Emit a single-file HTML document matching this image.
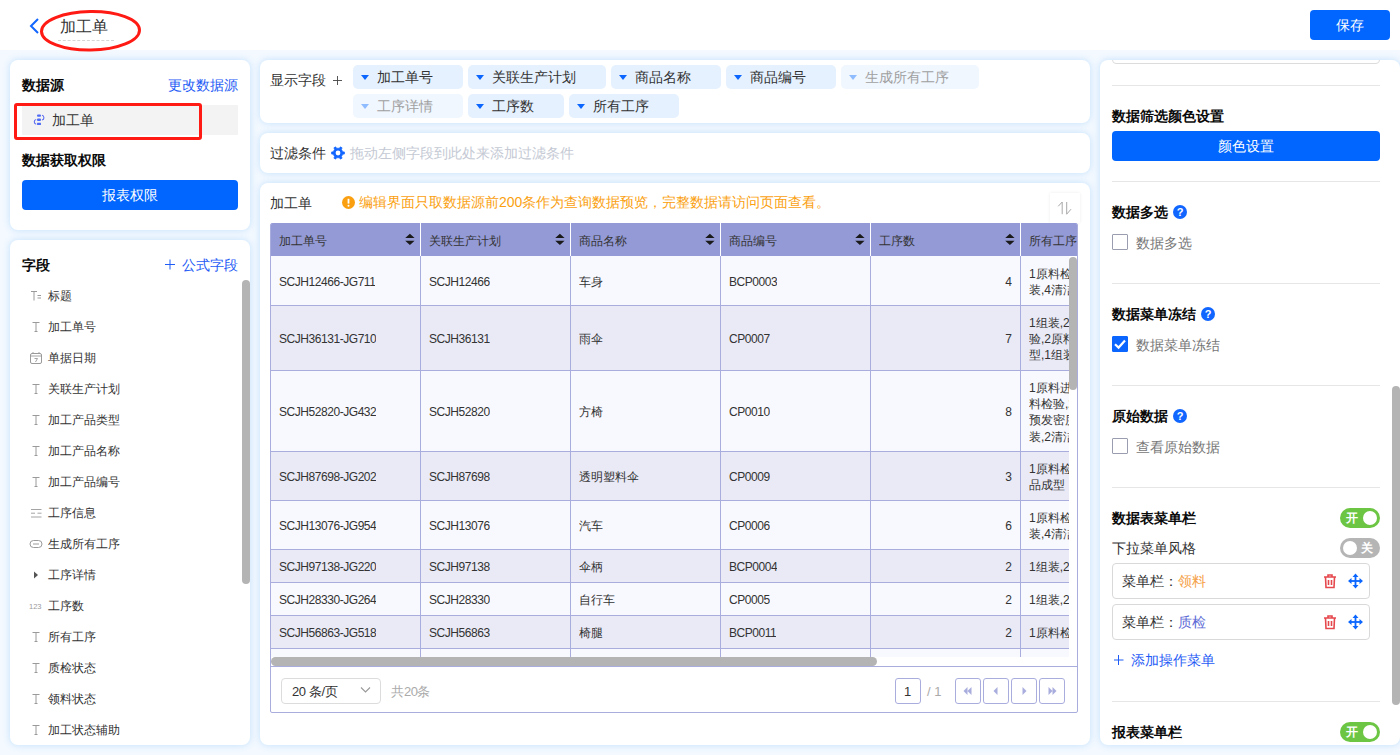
<!DOCTYPE html><html><head><meta charset="utf-8"><style>
*{box-sizing:border-box;margin:0;padding:0}
html,body{width:1400px;height:755px;overflow:hidden}
body{font-family:"Liberation Sans",sans-serif;font-size:14px;color:#333;background:#F4F9FF;position:relative}
.abs{position:absolute}
.panel{position:absolute;background:#fff;border-radius:8px;box-shadow:0 0 6px 1px rgba(196,226,253,.85)}
.t{position:absolute;white-space:nowrap;line-height:14px}
.b{font-weight:bold;color:#0a0a0a}
.blue{color:#1F5CF5}
.btn{position:absolute;background:#0066FF;color:#fff;border-radius:4px;text-align:center}
.fld{left:48px;font-size:12px;color:#333;line-height:12px}
.chip{position:absolute;height:24px;border-radius:5px;background:#E5F1FE;font-size:14px;line-height:24px;color:#333;padding-left:24px;white-space:nowrap}
.chip:before{content:"";position:absolute;left:8px;top:10px;border-left:4.5px solid transparent;border-right:4.5px solid transparent;border-top:5px solid #0B66FF}
.chip.dis{background:#F0F7FF;color:#A0A0A0}
.chip.dis:before{border-top-color:#8FBCFF}
.cell{position:absolute;font-size:12px;line-height:16.25px;color:#333;overflow:hidden;white-space:nowrap}
.lat{letter-spacing:-0.45px}
.hl{position:absolute;background:#A9ADDE}
.rt{font-size:14px}
.dv{position:absolute;left:1112px;width:268px;height:1px;background:#E6E6E6}
.cb{position:absolute;left:1112px;width:16px;height:16px;border:1px solid #9A9CB0;border-radius:1px;background:#fff}
.q{position:absolute;width:14px;height:14px;border-radius:50%;background:#1166FF;color:#fff;font-size:11px;font-weight:bold;line-height:14px;text-align:center}
.tg{position:absolute;left:1340px;width:40px;height:20px;border-radius:10px;color:#fff;font-size:12px;line-height:20px;font-weight:bold}
.tg i{position:absolute;top:3px;width:14px;height:14px;border-radius:50%;background:#fff}
.pb{position:absolute;top:678px;width:26px;height:26px;border:1px solid #A9ADDE;border-radius:3px;background:#fff}
</style></head><body>
<div class="abs" style="left:0;top:0;width:1400px;height:50px;background:#fff"></div>
<svg class="abs" style="left:28px;top:17px" width="14" height="18" viewBox="0 0 14 18"><path d="M10 2 L3 9 L10 16" fill="none" stroke="#1166FF" stroke-width="2"/></svg>
<div class="t" style="left:60px;top:19px;font-size:16px;line-height:16px;color:#333">加工单</div>
<div class="abs" style="left:58px;top:40px;width:56px;border-top:1px dashed #d5d5d5"></div>
<svg class="abs" style="left:36px;top:6px" width="110" height="50"><ellipse cx="54.5" cy="24.8" rx="49" ry="19.3" fill="none" stroke="#FF1A14" stroke-width="3" transform="rotate(-0.8 54.5 24.8)"/></svg>
<div class="btn" style="left:1310px;top:10px;width:80px;height:30px;line-height:30px;font-size:14px">保存</div>
<div class="panel" style="left:10px;top:60px;width:240px;height:170px"></div>
<div class="t b" style="left:22px;top:78px">数据源</div>
<div class="t blue" style="left:168px;top:78px">更改数据源</div>
<div class="abs" style="left:22px;top:105px;width:216px;height:30px;background:#F3F3F3"></div>
<svg class="abs" style="left:32px;top:111px" width="14" height="16" viewBox="0 0 14 16"><g fill="#4F6BF5"><rect x="5" y="3.4" width="4" height="2.4" rx="1"/><rect x="5" y="7.6" width="4" height="2.4" rx="1"/><rect x="5" y="11.8" width="4" height="2.2" rx="0.4"/></g><g fill="none" stroke="#5B6CF0" stroke-width="1.1"><path d="M10 4.3A2.4 2.4 0 0 1 10 9"/><path d="M4.2 8.5A2.4 2.4 0 0 0 4.2 13.2"/></g></svg>
<div class="t" style="left:52px;top:113px">加工单</div>
<div class="abs" style="left:14px;top:103px;width:188px;height:37px;border:3px solid #FF1A14;border-radius:3px"></div>
<div class="t b" style="left:22px;top:153px">数据获取权限</div>
<div class="btn" style="left:22px;top:180px;width:216px;height:30px;line-height:30px">报表权限</div>
<div class="panel" style="left:10px;top:240px;width:240px;height:505px"></div>
<div class="t b" style="left:22px;top:258px">字段</div>
<svg class="abs" style="left:165px;top:259px" width="11" height="11"><path d="M5 0.5V10.5M0 5.5H10" stroke="#1F5CF5" stroke-width="1"/></svg>
<div class="t blue" style="left:182px;top:258px">公式字段</div>
<div class="t fld" style="top:289.5px">标题</div>
<svg class="abs" style="left:29px;top:288.5px" width="14" height="14" viewBox="0 0 14 14"><path d="M2 2.5H8M5 2.5V11.5M8.5 6.5H12M8.5 9H12" stroke="#9a9a9a" stroke-width="1" fill="none"/></svg>
<div class="t fld" style="top:320.5px">加工单号</div>
<svg class="abs" style="left:29px;top:319.5px" width="14" height="14" viewBox="0 0 14 14"><path d="M3.5 2.5H10.5M7 2.5V11.5M5.5 11.5H8.5" stroke="#9a9a9a" stroke-width="1" fill="none"/></svg>
<div class="t fld" style="top:351.5px">单据日期</div>
<svg class="abs" style="left:29px;top:350.5px" width="14" height="14" viewBox="0 0 14 14"><rect x="1.5" y="2.5" width="11" height="10" rx="1.5" stroke="#9a9a9a" fill="none"/><path d="M1.5 5H12.5M4 1V3M10 1V3M5.5 7.5H8.5L6.5 11" stroke="#9a9a9a" stroke-width="0.9" fill="none"/></svg>
<div class="t fld" style="top:382.5px">关联生产计划</div>
<svg class="abs" style="left:29px;top:381.5px" width="14" height="14" viewBox="0 0 14 14"><path d="M3.5 2.5H10.5M7 2.5V11.5M5.5 11.5H8.5" stroke="#9a9a9a" stroke-width="1" fill="none"/></svg>
<div class="t fld" style="top:413.5px">加工产品类型</div>
<svg class="abs" style="left:29px;top:412.5px" width="14" height="14" viewBox="0 0 14 14"><path d="M3.5 2.5H10.5M7 2.5V11.5M5.5 11.5H8.5" stroke="#9a9a9a" stroke-width="1" fill="none"/></svg>
<div class="t fld" style="top:444.5px">加工产品名称</div>
<svg class="abs" style="left:29px;top:443.5px" width="14" height="14" viewBox="0 0 14 14"><path d="M3.5 2.5H10.5M7 2.5V11.5M5.5 11.5H8.5" stroke="#9a9a9a" stroke-width="1" fill="none"/></svg>
<div class="t fld" style="top:475.5px">加工产品编号</div>
<svg class="abs" style="left:29px;top:474.5px" width="14" height="14" viewBox="0 0 14 14"><path d="M3.5 2.5H10.5M7 2.5V11.5M5.5 11.5H8.5" stroke="#9a9a9a" stroke-width="1" fill="none"/></svg>
<div class="t fld" style="top:506.5px">工序信息</div>
<svg class="abs" style="left:29px;top:505.5px" width="14" height="14" viewBox="0 0 14 14"><path d="M2 3.5H12.5M2 7.2H6M8.5 7.2H12.5M2 11H12.5" stroke="#9a9a9a" stroke-width="0.9" fill="none"/></svg>
<div class="t fld" style="top:537.5px">生成所有工序</div>
<svg class="abs" style="left:29px;top:536.5px" width="14" height="14" viewBox="0 0 14 14"><rect x="1" y="3.5" width="12" height="7" rx="3.5" stroke="#9a9a9a" fill="none"/><path d="M4 7H10" stroke="#9a9a9a"/></svg>
<div class="t fld" style="top:568.5px">工序详情</div>
<svg class="abs" style="left:29px;top:567.5px" width="14" height="14" viewBox="0 0 14 14"><path d="M5 3.5L9 7L5 10.5Z" fill="#555"/></svg>
<div class="t fld" style="top:599.5px">工序数</div>
<svg class="abs" style="left:29px;top:598.5px" width="14" height="14" viewBox="0 0 14 14"><text x="0" y="10" font-size="7.5" fill="#9a9a9a" font-family="Liberation Sans">123</text></svg>
<div class="t fld" style="top:630.5px">所有工序</div>
<svg class="abs" style="left:29px;top:629.5px" width="14" height="14" viewBox="0 0 14 14"><path d="M3.5 2.5H10.5M7 2.5V11.5M5.5 11.5H8.5" stroke="#9a9a9a" stroke-width="1" fill="none"/></svg>
<div class="t fld" style="top:661.5px">质检状态</div>
<svg class="abs" style="left:29px;top:660.5px" width="14" height="14" viewBox="0 0 14 14"><path d="M3.5 2.5H10.5M7 2.5V11.5M5.5 11.5H8.5" stroke="#9a9a9a" stroke-width="1" fill="none"/></svg>
<div class="t fld" style="top:692.5px">领料状态</div>
<svg class="abs" style="left:29px;top:691.5px" width="14" height="14" viewBox="0 0 14 14"><path d="M3.5 2.5H10.5M7 2.5V11.5M5.5 11.5H8.5" stroke="#9a9a9a" stroke-width="1" fill="none"/></svg>
<div class="t fld" style="top:723.5px">加工状态辅助</div>
<svg class="abs" style="left:29px;top:722.5px" width="14" height="14" viewBox="0 0 14 14"><path d="M3.5 2.5H10.5M7 2.5V11.5M5.5 11.5H8.5" stroke="#9a9a9a" stroke-width="1" fill="none"/></svg>
<div class="abs" style="left:242px;top:280px;width:8px;height:304px;background:#B4B4B4;border-radius:4px"></div>
<div class="panel" style="left:260px;top:60px;width:830px;height:63px"></div>
<div class="t" style="left:270px;top:73px">显示字段</div>
<svg class="abs" style="left:333px;top:76px" width="9" height="9"><path d="M4.5 0V9M0 4.5H9" stroke="#444" stroke-width="0.9"/></svg>
<div class="chip" style="left:353px;top:65px;width:110px">加工单号</div>
<div class="chip" style="left:468px;top:65px;width:138px">关联生产计划</div>
<div class="chip" style="left:611px;top:65px;width:110px">商品名称</div>
<div class="chip" style="left:726px;top:65px;width:110px">商品编号</div>
<div class="chip dis" style="left:841px;top:65px;width:138px">生成所有工序</div>
<div class="chip dis" style="left:353px;top:94px;width:110px">工序详情</div>
<div class="chip" style="left:468px;top:94px;width:96px">工序数</div>
<div class="chip" style="left:569px;top:94px;width:110px">所有工序</div>
<div class="panel" style="left:260px;top:133px;width:830px;height:40px"></div>
<div class="t" style="left:270px;top:146px">过滤条件</div>
<svg class="abs" style="left:330.5px;top:146px" width="14" height="14" viewBox="0 0 14 14"><path d="M11.85 5.79 L13.52 5.97 L13.52 8.03 L11.85 8.21 L10.47 10.60 L11.15 12.13 L9.37 13.16 L8.38 11.81 L5.62 11.81 L4.63 13.16 L2.85 12.13 L3.53 10.60 L2.15 8.21 L0.48 8.03 L0.48 5.97 L2.15 5.79 L3.53 3.40 L2.85 1.87 L4.63 0.84 L5.62 2.19 L8.38 2.19 L9.37 0.84 L11.15 1.87 L10.47 3.40Z" fill="#1366FF" stroke="#1366FF" stroke-width="0.6" stroke-linejoin="round"/><circle cx="7" cy="7" r="2.4" fill="#fff"/></svg>
<div class="t" style="left:350px;top:146px;color:#C4C9D4">拖动左侧字段到此处来添加过滤条件</div>
<div class="panel" style="left:260px;top:183px;width:830px;height:562px"></div>
<div class="t" style="left:270px;top:196px">加工单</div>
<svg class="abs" style="left:342px;top:196px" width="13" height="13" viewBox="0 0 13 13"><circle cx="6.5" cy="6.5" r="6.5" fill="#FA9F10"/><path d="M6.5 2.8V7.6" stroke="#fff" stroke-width="1.8"/><circle cx="6.5" cy="9.8" r="1" fill="#fff"/></svg>
<div class="t" style="left:359px;top:195px;color:#FA9F10">编辑界面只取数据源前200条作为查询数据预览，完整数据请访问页面查看。</div>
<div class="abs" style="left:1050px;top:193px;width:30px;height:30px;background:#fff;box-shadow:0 0 3px rgba(0,0,0,.08)"></div>
<svg class="abs" style="left:1055px;top:199px" width="20" height="18"><path d="M7.2 3V15.2M7.2 3L3.2 7.3M11.7 3V15.2M11.7 15.2L16 10.2" stroke="#A8A8A8" stroke-width="1" fill="none"/></svg>
<div class="abs" style="left:270px;top:223px;width:808px;height:490px;border:1px solid #A9ADDE;border-radius:2px;background:#fff"></div>
<div class="abs" style="left:271px;top:223px;width:806px;height:33px;background:#949AD6;border-radius:2px 2px 0 0"></div>
<div class="cell" style="left:279px;top:233px;color:#333;font-size:12px">加工单号</div>
<svg class="abs" style="left:405px;top:232px" width="10" height="14" viewBox="0 0 10 14"><path d="M0.2 6L4.9 1.7L9.6 6Z M0.2 8.8L4.9 13.1L9.6 8.8Z" fill="#1a1a1a"/></svg>
<div class="cell" style="left:429px;top:233px;color:#333;font-size:12px">关联生产计划</div>
<svg class="abs" style="left:555px;top:232px" width="10" height="14" viewBox="0 0 10 14"><path d="M0.2 6L4.9 1.7L9.6 6Z M0.2 8.8L4.9 13.1L9.6 8.8Z" fill="#1a1a1a"/></svg>
<div class="cell" style="left:579px;top:233px;color:#333;font-size:12px">商品名称</div>
<svg class="abs" style="left:705px;top:232px" width="10" height="14" viewBox="0 0 10 14"><path d="M0.2 6L4.9 1.7L9.6 6Z M0.2 8.8L4.9 13.1L9.6 8.8Z" fill="#1a1a1a"/></svg>
<div class="cell" style="left:729px;top:233px;color:#333;font-size:12px">商品编号</div>
<svg class="abs" style="left:855px;top:232px" width="10" height="14" viewBox="0 0 10 14"><path d="M0.2 6L4.9 1.7L9.6 6Z M0.2 8.8L4.9 13.1L9.6 8.8Z" fill="#1a1a1a"/></svg>
<div class="cell" style="left:879px;top:233px;color:#333;font-size:12px">工序数</div>
<svg class="abs" style="left:1005px;top:232px" width="10" height="14" viewBox="0 0 10 14"><path d="M0.2 6L4.9 1.7L9.6 6Z M0.2 8.8L4.9 13.1L9.6 8.8Z" fill="#1a1a1a"/></svg>
<div class="cell" style="left:1029px;top:233px;color:#333;font-size:12px">所有工序</div>
<div class="abs" style="left:271px;top:256px;width:798px;height:49px;background:#F8F9FE"></div>
<div class="cell lat" style="left:279px;top:273.9px">SCJH12466-JG711</div>
<div class="cell lat" style="left:429px;top:273.9px">SCJH12466</div>
<div class="cell" style="left:579px;top:273.9px">车身</div>
<div class="cell lat" style="left:729px;top:273.9px">BCP0003</div>
<div class="cell" style="left:879px;width:133px;text-align:right;top:273.9px">4</div>
<div class="cell" style="left:1029px;width:40px;top:266.1px">1原料检验,2组<br>装,4清洁</div>
<div class="abs" style="left:271px;top:305px;width:798px;height:65px;background:#E9EAF6"></div>
<div class="cell lat" style="left:279px;top:330.9px">SCJH36131-JG710</div>
<div class="cell lat" style="left:429px;top:330.9px">SCJH36131</div>
<div class="cell" style="left:579px;top:330.9px">雨伞</div>
<div class="cell lat" style="left:729px;top:330.9px">CP0007</div>
<div class="cell" style="left:879px;width:133px;text-align:right;top:330.9px">7</div>
<div class="cell" style="left:1029px;width:40px;top:314.9px">1组装,2质<br>验,2原料<br>型,1组装</div>
<div class="abs" style="left:271px;top:370px;width:798px;height:81px;background:#F8F9FE"></div>
<div class="cell lat" style="left:279px;top:403.9px">SCJH52820-JG432</div>
<div class="cell lat" style="left:429px;top:403.9px">SCJH52820</div>
<div class="cell" style="left:579px;top:403.9px">方椅</div>
<div class="cell lat" style="left:729px;top:403.9px">CP0010</div>
<div class="cell" style="left:879px;width:133px;text-align:right;top:403.9px">8</div>
<div class="cell" style="left:1029px;width:40px;top:379.8px">1原料进<br>料检验,2<br>预发密度<br>装,2清洁</div>
<div class="abs" style="left:271px;top:451px;width:798px;height:49px;background:#E9EAF6"></div>
<div class="cell lat" style="left:279px;top:468.9px">SCJH87698-JG202</div>
<div class="cell lat" style="left:429px;top:468.9px">SCJH87698</div>
<div class="cell" style="left:579px;top:468.9px">透明塑料伞</div>
<div class="cell lat" style="left:729px;top:468.9px">CP0009</div>
<div class="cell" style="left:879px;width:133px;text-align:right;top:468.9px">3</div>
<div class="cell" style="left:1029px;width:40px;top:461.1px">1原料检<br>品成型</div>
<div class="abs" style="left:271px;top:500px;width:798px;height:49px;background:#F8F9FE"></div>
<div class="cell lat" style="left:279px;top:517.9px">SCJH13076-JG954</div>
<div class="cell lat" style="left:429px;top:517.9px">SCJH13076</div>
<div class="cell" style="left:579px;top:517.9px">汽车</div>
<div class="cell lat" style="left:729px;top:517.9px">CP0006</div>
<div class="cell" style="left:879px;width:133px;text-align:right;top:517.9px">6</div>
<div class="cell" style="left:1029px;width:40px;top:510.1px">1原料检<br>装,4清洁</div>
<div class="abs" style="left:271px;top:549px;width:798px;height:33px;background:#E9EAF6"></div>
<div class="cell lat" style="left:279px;top:558.9px">SCJH97138-JG220</div>
<div class="cell lat" style="left:429px;top:558.9px">SCJH97138</div>
<div class="cell" style="left:579px;top:558.9px">伞柄</div>
<div class="cell lat" style="left:729px;top:558.9px">BCP0004</div>
<div class="cell" style="left:879px;width:133px;text-align:right;top:558.9px">2</div>
<div class="cell" style="left:1029px;width:40px;top:559.2px">1组装,2质</div>
<div class="abs" style="left:271px;top:582px;width:798px;height:33px;background:#F8F9FE"></div>
<div class="cell lat" style="left:279px;top:591.9px">SCJH28330-JG264</div>
<div class="cell lat" style="left:429px;top:591.9px">SCJH28330</div>
<div class="cell" style="left:579px;top:591.9px">自行车</div>
<div class="cell lat" style="left:729px;top:591.9px">CP0005</div>
<div class="cell" style="left:879px;width:133px;text-align:right;top:591.9px">2</div>
<div class="cell" style="left:1029px;width:40px;top:592.2px">1组装,2质</div>
<div class="abs" style="left:271px;top:615px;width:798px;height:33px;background:#E9EAF6"></div>
<div class="cell lat" style="left:279px;top:624.9px">SCJH56863-JG518</div>
<div class="cell lat" style="left:429px;top:624.9px">SCJH56863</div>
<div class="cell" style="left:579px;top:624.9px">椅腿</div>
<div class="cell lat" style="left:729px;top:624.9px">BCP0011</div>
<div class="cell" style="left:879px;width:133px;text-align:right;top:624.9px">2</div>
<div class="cell" style="left:1029px;width:40px;top:625.2px">1原料检</div>
<div class="abs" style="left:271px;top:648px;width:798px;height:9px;background:#F8F9FE"></div>
<div class="hl" style="left:271px;top:305px;width:798px;height:1px"></div>
<div class="hl" style="left:271px;top:370px;width:798px;height:1px"></div>
<div class="hl" style="left:271px;top:451px;width:798px;height:1px"></div>
<div class="hl" style="left:271px;top:500px;width:798px;height:1px"></div>
<div class="hl" style="left:271px;top:549px;width:798px;height:1px"></div>
<div class="hl" style="left:271px;top:582px;width:798px;height:1px"></div>
<div class="hl" style="left:271px;top:615px;width:798px;height:1px"></div>
<div class="hl" style="left:271px;top:648px;width:798px;height:1px"></div>
<div class="hl" style="left:420px;top:256px;width:1px;height:401px"></div>
<div class="hl" style="left:570px;top:256px;width:1px;height:401px"></div>
<div class="hl" style="left:720px;top:256px;width:1px;height:401px"></div>
<div class="hl" style="left:870px;top:256px;width:1px;height:401px"></div>
<div class="hl" style="left:1020px;top:256px;width:1px;height:401px"></div>
<div class="abs" style="left:420px;top:223px;width:1px;height:33px;background:#fff"></div>
<div class="abs" style="left:570px;top:223px;width:1px;height:33px;background:#fff"></div>
<div class="abs" style="left:720px;top:223px;width:1px;height:33px;background:#fff"></div>
<div class="abs" style="left:870px;top:223px;width:1px;height:33px;background:#fff"></div>
<div class="abs" style="left:1020px;top:223px;width:1px;height:33px;background:#fff"></div>
<div class="abs" style="left:1069px;top:256px;width:8px;height:401px;background:#fff"></div>
<div class="abs" style="left:1069px;top:257px;width:8px;height:133px;background:#B4B4B4;border-radius:4px"></div>
<div class="abs" style="left:271px;top:657px;width:806px;height:9px;background:#fff"></div>
<div class="abs" style="left:271px;top:657px;width:606px;height:9px;background:#B4B4B4;border-radius:4.5px"></div>
<div class="hl" style="left:271px;top:666px;width:806px;height:1px"></div>
<div class="abs" style="left:281px;top:678px;width:100px;height:26px;border:1px solid #DCDCDC;border-radius:4px"></div>
<div class="t" style="left:292px;top:685px;font-size:13px;line-height:13px"><span style="letter-spacing:-0.5px">20 </span>条<span style="letter-spacing:-0.5px">/</span>页</div>
<svg class="abs" style="left:360px;top:686px" width="11" height="8" viewBox="0 0 11 8"><path d="M1 1.5L5.5 6L10 1.5" stroke="#999" stroke-width="1.1" fill="none"/></svg>
<div class="t" style="left:391px;top:685px;font-size:13px;line-height:13px;color:#AAA">共<span style="letter-spacing:-0.5px">20</span>条</div>
<div class="pb" style="left:895px"></div>
<div class="t" style="left:904px;top:685px;font-size:13px;line-height:13px">1</div>
<div class="t" style="left:927px;top:685px;font-size:13px;line-height:13px;color:#AAA">/ 1</div>
<div class="pb" style="left:955px"></div>
<svg class="abs" style="left:955px;top:678px" width="26" height="26"><path d="M12.5 9L8.5 13L12.5 17Z M16.5 9L12.5 13L16.5 17Z" fill="#A9ADDE"/></svg>
<div class="pb" style="left:983px"></div>
<svg class="abs" style="left:983px;top:678px" width="26" height="26"><path d="M14.5 9L10.5 13L14.5 17Z" fill="#A9ADDE"/></svg>
<div class="pb" style="left:1011px"></div>
<svg class="abs" style="left:1011px;top:678px" width="26" height="26"><path d="M11.5 9L15.5 13L11.5 17Z" fill="#A9ADDE"/></svg>
<div class="pb" style="left:1039px"></div>
<svg class="abs" style="left:1039px;top:678px" width="26" height="26"><path d="M9.5 9L13.5 13L9.5 17Z M13.5 9L17.5 13L13.5 17Z" fill="#A9ADDE"/></svg>
<div class="panel" style="left:1100px;top:60px;width:300px;height:685px;overflow:hidden"><div class="abs" style="left:12px;top:-30px;width:268px;height:34px;border:1px solid #DCDCDC;border-radius:4px"></div></div>
<div class="dv" style="top:85px"></div>
<div class="t b" style="left:1112px;top:109px">数据筛选颜色设置</div>
<div class="btn" style="left:1112px;top:131px;width:268px;height:30px;line-height:30px">颜色设置</div>
<div class="dv" style="top:181px"></div>
<div class="t b" style="left:1112px;top:205px">数据多选</div>
<div class="q" style="left:1173px;top:205px">?</div>
<div class="cb" style="top:234px"></div>
<div class="t" style="left:1136px;top:236px;color:#777">数据多选</div>
<div class="dv" style="top:283px"></div>
<div class="t b" style="left:1112px;top:307px">数据菜单冻结</div>
<div class="q" style="left:1201px;top:307px">?</div>
<div class="cb" style="top:336px;background:#0B66FF;border-color:#0B66FF"></div>
<svg class="abs" style="left:1112px;top:336px" width="16" height="16"><path d="M3 8.2L6.6 11.6L13 4.6" stroke="#fff" stroke-width="2.2" fill="none"/></svg>
<div class="t" style="left:1136px;top:338px;color:#777">数据菜单冻结</div>
<div class="dv" style="top:385px"></div>
<div class="t b" style="left:1112px;top:409px">原始数据</div>
<div class="q" style="left:1173px;top:409px">?</div>
<div class="cb" style="top:438px"></div>
<div class="t" style="left:1136px;top:440px;color:#777">查看原始数据</div>
<div class="dv" style="top:487px"></div>
<div class="t b" style="left:1112px;top:511px">数据表菜单栏</div>
<div class="tg" style="top:508px;background:#6CC644"><span style="position:absolute;left:6px">开</span><i style="left:23px"></i></div>
<div class="t" style="left:1112px;top:541px">下拉菜单风格</div>
<div class="tg" style="top:538px;background:#B5B5B5"><i style="left:3px"></i><span style="position:absolute;left:21px">关</span></div>
<div class="abs" style="left:1112px;top:563px;width:258px;height:36px;border:1px solid #D9D9D9;border-radius:4px"></div>
<div class="t" style="left:1122px;top:574px;color:#333">菜单栏：<span style="color:#F5A34B">领料</span></div>
<svg class="abs" style="left:1323px;top:573px" width="14" height="16" viewBox="0 0 14 16"><g stroke="#E5484D" stroke-width="1.6" fill="none"><path d="M1 4H13M5 4V2H9V4M2.5 4L3 14.5H11L11.5 4M5.5 7V12M8.5 7V12"/></g></svg>
<svg class="abs" style="left:1348px;top:573px" width="15" height="16" viewBox="0 0 15 16"><g fill="#0B66FF"><path d="M7.5 0.5L10.5 4H4.5Z M7.5 15.5L10.5 12H4.5Z M0 8L3.5 5V11Z M15 8L11.5 5V11Z"/><rect x="6.6" y="3" width="1.8" height="10"/><rect x="2.5" y="7.1" width="10" height="1.8"/></g></svg>
<div class="abs" style="left:1112px;top:604px;width:258px;height:36px;border:1px solid #D9D9D9;border-radius:4px"></div>
<div class="t" style="left:1122px;top:615px;color:#333">菜单栏：<span style="color:#5C6BD6">质检</span></div>
<svg class="abs" style="left:1323px;top:614px" width="14" height="16" viewBox="0 0 14 16"><g stroke="#E5484D" stroke-width="1.6" fill="none"><path d="M1 4H13M5 4V2H9V4M2.5 4L3 14.5H11L11.5 4M5.5 7V12M8.5 7V12"/></g></svg>
<svg class="abs" style="left:1348px;top:614px" width="15" height="16" viewBox="0 0 15 16"><g fill="#0B66FF"><path d="M7.5 0.5L10.5 4H4.5Z M7.5 15.5L10.5 12H4.5Z M0 8L3.5 5V11Z M15 8L11.5 5V11Z"/><rect x="6.6" y="3" width="1.8" height="10"/><rect x="2.5" y="7.1" width="10" height="1.8"/></g></svg>
<svg class="abs" style="left:1114px;top:655px" width="10" height="10"><path d="M4.5 0V10M0 5H9.5" stroke="#1F5CF5" stroke-width="1"/></svg>
<div class="t blue" style="left:1131px;top:653px">添加操作菜单</div>
<div class="dv" style="top:701px"></div>
<div class="t b" style="left:1112px;top:725px">报表菜单栏</div>
<div class="tg" style="top:722px;background:#6CC644"><span style="position:absolute;left:6px">开</span><i style="left:23px"></i></div>
<div class="abs" style="left:1392px;top:386px;width:8px;height:319px;background:#B4B4B4;border-radius:4px"></div>
</body></html>
